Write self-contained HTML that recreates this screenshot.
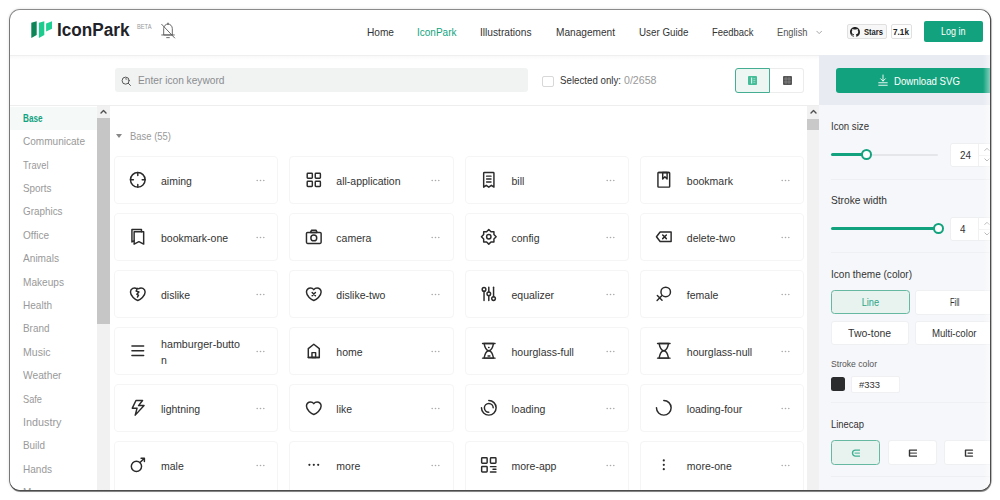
<!DOCTYPE html>
<html lang="en"><head><meta charset="utf-8"><title>IconPark</title>
<style>
html,body{margin:0;padding:0;background:#fff;}
body{width:1000px;height:500px;position:relative;overflow:hidden;font-family:"Liberation Sans",sans-serif;}
#frame{position:absolute;left:10px;top:10px;width:980px;height:480px;border-radius:10px;background:#fff;overflow:hidden;}
#shadow{position:absolute;left:10px;top:10px;width:980px;height:480px;border-radius:10px;box-shadow:0 0 0 1px rgba(0,0,0,.40), 0.600px 1px 0.600px 0.900px rgba(0,0,0,.45), 0 0 3px 1px rgba(0,0,0,.14);}
.t{position:absolute;white-space:nowrap;}
.b{position:absolute;box-sizing:border-box;}
#in{position:absolute;left:-10px;top:-10px;width:1000px;height:500px;}
</style></head><body>
<div id="shadow"></div>
<div id="frame"><div id="in">
<div class="b" style="left:10px;top:54.6px;width:980px;height:1.2px;background:#efefef;"></div>
<div class="b" style="left:10px;top:55.8px;width:809px;height:4px;background:linear-gradient(180deg,#f9f9f9,#fdfdfd 70%,#fff);"></div>
<svg class="b" style="left:30px;top:20px" width="24" height="20" viewBox="0 0 24 20"><path d="M1.300 2.800L6.700 1.300V15.100L1.300 18.100Z" fill="#0d8558"/><path d="M8.900 2.800L14.300 1.300V15.100L8.900 18.100Z" fill="#1ecb8f"/><path d="M16.100 3.400L22 1.300V8.800L16.100 11.500Z" fill="#1fd093"/></svg>
<span id="t1" class="t" style="left:56.7px;top:18.2px;font-size:17.5px;line-height:24px;color:#1f2329;font-weight:700;transform:scaleX(0.9819);transform-origin:left center;">IconPark</span>
<span id="t2" class="t" style="left:137px;top:22.8px;font-size:6.5px;line-height:8px;color:#999;font-weight:400;transform:scaleX(0.8788);transform-origin:left center;">BETA</span>
<svg class="b" style="left:160px;top:21.5px;" width="16" height="17.3" viewBox="0 -2 48 52" fill="none" stroke="#5a5a5a" stroke-width="2.7" stroke-linecap="round" stroke-linejoin="round"><path d="M24 4c-7.500 0-13 6.300-13 14v19h26V18c0-7.700-5.500-14-13-14Z"/><path d="M5 37h38M20 45h8M24 4V1"/><path d="M5 5l39 41"/></svg>
<span id="t3" class="t" style="left:366.75px;top:24.5px;font-size:10.5px;line-height:15px;color:#333;font-weight:400;transform:scaleX(0.9637);transform-origin:left center;">Home</span>
<span id="t4" class="t" style="left:417px;top:24.5px;font-size:10.5px;line-height:15px;color:#12a37e;font-weight:400;transform:scaleX(0.9532);transform-origin:left center;">IconPark</span>
<span id="t5" class="t" style="left:480px;top:24.5px;font-size:10.5px;line-height:15px;color:#333;font-weight:400;transform:scaleX(0.9697);transform-origin:left center;">Illustrations</span>
<span id="t6" class="t" style="left:555.5px;top:24.5px;font-size:10.5px;line-height:15px;color:#333;font-weight:400;transform:scaleX(0.9625);transform-origin:left center;">Management</span>
<span id="t7" class="t" style="left:638.75px;top:24.5px;font-size:10.5px;line-height:15px;color:#333;font-weight:400;transform:scaleX(0.9320);transform-origin:left center;">User Guide</span>
<span id="t8" class="t" style="left:711.75px;top:24.5px;font-size:10.5px;line-height:15px;color:#333;font-weight:400;transform:scaleX(0.8997);transform-origin:left center;">Feedback</span>
<span id="t9" class="t" style="left:776.5px;top:24.5px;font-size:10.5px;line-height:15px;color:#555;font-weight:400;transform:scaleX(0.8853);transform-origin:left center;">English</span>
<svg class="b" style="left:816px;top:29.5px;" width="6.4" height="4.8" viewBox="0 0 8 6" fill="none" stroke="#999" stroke-width="1.1" stroke-linecap="round" stroke-linejoin="round"><path d="M1 1.500l3 3 3-3"/></svg>
<div class="b" style="left:847px;top:24px;width:39.5px;height:14.8px;background:#f7f7f7;border:1px solid #e0e0e0;border-radius:2px;"></div>
<svg class="b" style="left:850px;top:26.500px" width="10" height="10" viewBox="0 0 16 16"><path fill="#222" d="M8 0C3.580 0 0 3.580 0 8c0 3.540 2.290 6.530 5.470 7.590.4.070.55-.17.55-.38 0-.19-.010-.82-.010-1.490-2.010.370-2.530-.49-2.690-.94-.090-.230-.48-.94-.82-1.130-.28-.15-.68-.52-.010-.53.630-.010 1.080.58 1.230.82.720 1.210 1.870.870 2.330.660.070-.52.280-.870.510-1.070-1.780-.2-3.640-.89-3.640-3.950 0-.870.310-1.590.82-2.150-.080-.2-.36-1.020.080-2.120 0 0 .670-.210 2.200.82.640-.18 1.320-.27 2-.27s1.360.090 2 .27c1.530-1.040 2.200-.82 2.200-.82.440 1.100.160 1.920.080 2.120.51.560.82 1.270.82 2.150 0 3.070-1.870 3.750-3.650 3.950.29.250.54.730.54 1.480 0 1.070-.010 1.930-.010 2.200 0 .210.150.460.550.380A8.013 8.013 0 0 0 16 8c0-4.420-3.580-8-8-8z"/></svg>
<span id="t10" class="t" style="left:863.5px;top:26.5px;font-size:9px;line-height:10px;color:#222;font-weight:700;transform:scaleX(0.8439);transform-origin:left center;">Stars</span>
<div class="b" style="left:890.5px;top:24px;width:21.5px;height:14.8px;background:#fdfdfd;border:1px solid #e0e0e0;border-radius:2px;"></div>
<span id="t11" class="t" style="left:893.4px;top:26.5px;font-size:9px;line-height:10px;color:#222;font-weight:700;transform:scaleX(0.9127);transform-origin:left center;">7.1k</span>
<div class="b" style="left:924px;top:21px;width:58.5px;height:21px;background:#12a37e;border-radius:2px;"></div>
<div class="t" style="left:953.6px;width:200px;margin-left:-100px;text-align:center;top:24.2px;font-size:10.5px;line-height:15px;color:#fff;font-weight:400;"><span id="t12" style="display:inline-block;transform:scaleX(0.8564);transform-origin:center center;">Log in</span></div>
<div class="b" style="left:10px;top:105px;width:809px;height:1px;background:#eeeeee;"></div>
<div class="b" style="left:114.5px;top:68.3px;width:413px;height:23.6px;background:#f1f3f3;border-radius:3px;"></div>
<svg class="b" style="left:120.8px;top:75.6px;" width="10.6" height="10.6" viewBox="0 0 48 48" fill="none" stroke="#555" stroke-width="4.4" stroke-linecap="round" stroke-linejoin="round"><circle cx="21" cy="21" r="16"/><path d="M33 33l10 10M27 15a8 8 0 0 0-6-2.500"/></svg>
<span id="t13" class="t" style="left:137.5px;top:72.2px;font-size:11.5px;line-height:16px;color:#8b8d8f;font-weight:400;transform:scaleX(0.8845);transform-origin:left center;">Enter icon keyword</span>
<div class="b" style="left:542px;top:75.5px;width:11.5px;height:11.5px;background:#fff;border:1px solid #d8d8d8;border-radius:2px;"></div>
<span id="t14" class="t" style="left:559.5px;top:73px;font-size:10.5px;line-height:15px;color:#333;font-weight:400;transform:scaleX(0.9247);transform-origin:left center;">Selected only:</span>
<span id="t15" class="t" style="left:623.5px;top:73px;font-size:10.5px;line-height:15px;color:#999;font-weight:400;transform:scaleX(1.0117);transform-origin:left center;">0/2658</span>
<div class="b" style="left:734.9px;top:68px;width:35px;height:24.5px;background:#eef6f3;border:1px solid #45ad91;border-radius:3px 0 0 3px;"></div>
<div class="b" style="left:769.5px;top:68px;width:34.5px;height:24.5px;background:#fff;border:1px solid #ececec;border-left:none;border-radius:0 3px 3px 0;"></div>
<svg class="b" style="left:748.200px;top:75.800px" width="9" height="9" viewBox="0 0 9 9"><rect x="0" y="0" width="9" height="9" rx="1" fill="#45bd98"/><rect x="3" y="1.500" width="1.200" height="6" fill="#d9f3ea"/><rect x="5.300" y="2.200" width="2" height="1" fill="#8fdcc4"/><rect x="5.300" y="4" width="2" height="1" fill="#8fdcc4"/><rect x="5.300" y="5.800" width="2" height="1" fill="#8fdcc4"/></svg>
<svg class="b" style="left:782.500px;top:75.800px" width="9" height="9" viewBox="0 0 9 9"><rect x="0" y="0" width="9" height="9" rx="1" fill="#555"/><path d="M3 0.800v7.400M6 0.800v7.400M0.800 3h7.400M0.800 6h7.400" stroke="#8a8a8a" stroke-width=".7"/></svg>
<div class="b" style="left:819px;top:55px;width:171px;height:50px;background:#e9ebf3;"></div>
<div class="b" style="left:819px;top:105px;width:171px;height:390px;background:#f6f7fa;"></div>
<div class="b" style="left:836.25px;top:68px;width:160px;height:24.5px;background:#12a37e;border-radius:3px;"></div>
<svg class="b" style="left:876.5px;top:74px;" width="12" height="12.5" viewBox="0 0 48 50" fill="none" stroke="#fff" stroke-width="3.6" stroke-linecap="round" stroke-linejoin="round"><path d="M24 4v24M14.500 19l9.500 9.500 9.500-9.500M7 35h34M7 45h34"/></svg>
<span id="t16" class="t" style="left:894.2px;top:73px;font-size:11.3px;line-height:16px;color:#fff;font-weight:400;transform:scaleX(0.8544);transform-origin:left center;">Download SVG</span>
<span id="t17" class="t" style="left:830.8px;top:119.3px;font-size:10.5px;line-height:15px;color:#333;font-weight:400;transform:scaleX(0.9170);transform-origin:left center;">Icon size</span>
<div class="b" style="left:831px;top:153.5px;width:107px;height:2.6px;background:#e4e6ea;border-radius:1.500px;"></div>
<div class="b" style="left:831px;top:153.3px;width:35px;height:3px;background:#12a37e;border-radius:1.500px;"></div>
<div class="b" style="left:860.9px;top:149.3px;width:11px;height:11px;background:#fff;border:2px solid #12a37e;border-radius:50%;"></div>
<div class="b" style="left:950.2px;top:143px;width:50px;height:24px;background:#fff;border:1px solid #eeeff1;border-radius:3px;"></div>
<span id="t18" class="t" style="left:959.6px;top:148.1px;font-size:10.5px;line-height:15px;color:#333;font-weight:400;transform:scaleX(0.9412);transform-origin:left center;">24</span>
<svg class="b" style="left:983.5px;top:146.7px;" width="6" height="4.3" viewBox="0 0 7 5" fill="none" stroke="#999" stroke-width="1" stroke-linecap="round" stroke-linejoin="round"><path d="M1 4l2.500-2.500L6 4"/></svg>
<svg class="b" style="left:983.5px;top:158.3px;" width="6" height="4.3" viewBox="0 0 7 5" fill="none" stroke="#999" stroke-width="1" stroke-linecap="round" stroke-linejoin="round"><path d="M1 1l2.500 2.500L6 1"/></svg>
<span id="t19" class="t" style="left:830.8px;top:192.5px;font-size:10.5px;line-height:15px;color:#333;font-weight:400;transform:scaleX(0.9692);transform-origin:left center;">Stroke width</span>
<div class="b" style="left:831px;top:227.3px;width:107px;height:3px;background:#12a37e;border-radius:1.500px;"></div>
<div class="b" style="left:932.5px;top:223.3px;width:11px;height:11px;background:#fff;border:2px solid #12a37e;border-radius:50%;"></div>
<div class="b" style="left:950.2px;top:217px;width:50px;height:24px;background:#fff;border:1px solid #eeeff1;border-radius:3px;"></div>
<span id="t20" class="t" style="left:959.8px;top:222.1px;font-size:10.5px;line-height:15px;color:#333;font-weight:400;transform:scaleX(0.9412);transform-origin:left center;">4</span>
<svg class="b" style="left:983.5px;top:220.7px;" width="6" height="4.3" viewBox="0 0 7 5" fill="none" stroke="#999" stroke-width="1" stroke-linecap="round" stroke-linejoin="round"><path d="M1 4l2.500-2.500L6 4"/></svg>
<svg class="b" style="left:983.5px;top:232.3px;" width="6" height="4.3" viewBox="0 0 7 5" fill="none" stroke="#999" stroke-width="1" stroke-linecap="round" stroke-linejoin="round"><path d="M1 1l2.500 2.500L6 1"/></svg>
<div class="b" style="left:831px;top:252px;width:160px;height:1px;background:#eff0f3;"></div>
<div class="b" style="left:831px;top:179px;width:160px;height:1px;background:#eeeff2;"></div>
<div class="b" style="left:978px;top:144px;width:1px;height:22px;background:#f1f1f1;"></div>
<div class="b" style="left:978.5px;top:154.5px;width:12px;height:1px;background:#f3f3f3;"></div>
<div class="b" style="left:978px;top:218px;width:1px;height:22px;background:#f1f1f1;"></div>
<div class="b" style="left:978.5px;top:228.5px;width:12px;height:1px;background:#f3f3f3;"></div>
<span id="t21" class="t" style="left:830.8px;top:266.5px;font-size:10.5px;line-height:15px;color:#333;font-weight:400;transform:scaleX(0.9572);transform-origin:left center;">Icon theme (color)</span>
<div class="b" style="left:830.5px;top:290.2px;width:79.3px;height:24.3px;background:#e8f2ef;border:1.200px solid #66b8a0;border-radius:3.500px;"></div>
<div class="t" style="left:870.3px;width:200px;margin-left:-100px;text-align:center;top:295.2px;font-size:11px;line-height:15px;color:#2ba688;font-weight:400;"><span id="t22" style="display:inline-block;transform:scaleX(0.8415);transform-origin:center center;">Line</span></div>
<div class="b" style="left:915.2px;top:290.3px;width:80px;height:24.3px;background:#fff;border:1px solid #eff0f2;border-radius:3px;"></div>
<div class="t" style="left:954.6px;width:200px;margin-left:-100px;text-align:center;top:295.2px;font-size:10.5px;line-height:15px;color:#333;font-weight:400;"><span id="t23" style="display:inline-block;transform:scaleX(0.7153);transform-origin:center center;">Fill</span></div>
<div class="b" style="left:830.8px;top:320.6px;width:78.5px;height:24.3px;background:#fff;border:1px solid #eff0f2;border-radius:3px;"></div>
<div class="t" style="left:870px;width:200px;margin-left:-100px;text-align:center;top:326px;font-size:10.5px;line-height:15px;color:#333;font-weight:400;"><span id="t24" style="display:inline-block;transform:scaleX(0.9953);transform-origin:center center;">Two-tone</span></div>
<div class="b" style="left:915.2px;top:320.6px;width:80px;height:24.3px;background:#fff;border:1px solid #eff0f2;border-radius:3px;"></div>
<div class="t" style="left:953.8px;width:200px;margin-left:-100px;text-align:center;top:325.7px;font-size:10.5px;line-height:15px;color:#333;font-weight:400;"><span id="t25" style="display:inline-block;transform:scaleX(0.9187);transform-origin:center center;">Multi-color</span></div>
<span id="t26" class="t" style="left:830.8px;top:356.8px;font-size:9.5px;line-height:13px;color:#555;font-weight:400;transform:scaleX(0.9075);transform-origin:left center;">Stroke color</span>
<div class="b" style="left:830.8px;top:377.2px;width:14.5px;height:14px;background:#2b2c2e;border-radius:2.500px;"></div>
<div class="b" style="left:851.3px;top:375.6px;width:49px;height:17px;background:#fff;border:1px solid #f0f0f2;border-radius:2px;"></div>
<span id="t27" class="t" style="left:858.5px;top:379.4px;font-size:9.3px;line-height:13px;color:#333;font-weight:400;transform:scaleX(1.0151);transform-origin:left center;">#333</span>
<div class="b" style="left:831px;top:402px;width:160px;height:1px;background:#eff0f3;"></div>
<div class="b" style="left:831px;top:476px;width:160px;height:1px;background:#eeeff2;"></div>
<span id="t28" class="t" style="left:830.8px;top:416.5px;font-size:10.5px;line-height:15px;color:#333;font-weight:400;transform:scaleX(0.8972);transform-origin:left center;">Linecap</span>
<div class="b" style="left:830.6px;top:440px;width:49.5px;height:24.5px;background:#e8f2ef;border:1.200px solid #66b8a0;border-radius:3.500px;"></div>
<div class="b" style="left:887.5px;top:440px;width:49.25px;height:24.5px;background:#fff;border:1px solid #eff0f2;border-radius:3px;"></div>
<div class="b" style="left:944.25px;top:440px;width:49.25px;height:24.5px;background:#fff;border:1px solid #eff0f2;border-radius:3px;"></div>
<svg class="b" style="left:850.8px;top:449px;" width="9.5" height="8.2" viewBox="0 0 9.500 8" fill="none" stroke="#3fb092" stroke-width="1.4" stroke-linecap="round" stroke-linejoin="round"><path d="M8.500 1H4.500a3 3 0 0 0 0 6H8.500"/><path d="M4 4h4.500" stroke-width="1"/></svg>
<svg class="b" style="left:907.5px;top:449px;" width="9.5" height="8.2" viewBox="0 0 9.500 8" fill="none" stroke="#333" stroke-width="1.4" stroke-linecap="round" stroke-linejoin="round"><path d="M8.500 1H1.500v6H8.500"/><path d="M1.500 4H8.500" stroke-width="1"/></svg>
<svg class="b" style="left:964px;top:449px;" width="9.5" height="8.2" viewBox="0 0 9.500 8" fill="none" stroke="#333" stroke-width="1.4" stroke-linecap="round" stroke-linejoin="round"><path d="M8.500 1H1.500v6H8.500"/><path d="M4 4H8.500" stroke-width="1.100"/></svg>
<div class="b" style="left:10px;top:106.5px;width:87px;height:23px;background:#f5f9f8;"></div>
<span id="t29" class="t" style="left:23px;top:110.8px;font-size:10.5px;line-height:15px;color:#12a37e;font-weight:700;transform:scaleX(0.7766);transform-origin:left center;">Base</span>
<span id="t30" class="t" style="left:23px;top:134.2px;font-size:10.5px;line-height:15px;color:#999;font-weight:400;transform:scaleX(0.9571);transform-origin:left center;">Communicate</span>
<span id="t31" class="t" style="left:23px;top:157.6px;font-size:10.5px;line-height:15px;color:#999;font-weight:400;transform:scaleX(0.8855);transform-origin:left center;">Travel</span>
<span id="t32" class="t" style="left:23px;top:181px;font-size:10.5px;line-height:15px;color:#999;font-weight:400;transform:scaleX(0.9388);transform-origin:left center;">Sports</span>
<span id="t33" class="t" style="left:23px;top:204.4px;font-size:10.5px;line-height:15px;color:#999;font-weight:400;transform:scaleX(0.9401);transform-origin:left center;">Graphics</span>
<span id="t34" class="t" style="left:23px;top:227.8px;font-size:10.5px;line-height:15px;color:#999;font-weight:400;transform:scaleX(0.9547);transform-origin:left center;">Office</span>
<span id="t35" class="t" style="left:23px;top:251.2px;font-size:10.5px;line-height:15px;color:#999;font-weight:400;transform:scaleX(0.9636);transform-origin:left center;">Animals</span>
<span id="t36" class="t" style="left:23px;top:274.6px;font-size:10.5px;line-height:15px;color:#999;font-weight:400;transform:scaleX(0.9622);transform-origin:left center;">Makeups</span>
<span id="t37" class="t" style="left:23px;top:298px;font-size:10.5px;line-height:15px;color:#999;font-weight:400;transform:scaleX(0.9552);transform-origin:left center;">Health</span>
<span id="t38" class="t" style="left:23px;top:321.4px;font-size:10.5px;line-height:15px;color:#999;font-weight:400;transform:scaleX(0.9454);transform-origin:left center;">Brand</span>
<span id="t39" class="t" style="left:23px;top:344.8px;font-size:10.5px;line-height:15px;color:#999;font-weight:400;transform:scaleX(1.0028);transform-origin:left center;">Music</span>
<span id="t40" class="t" style="left:23px;top:368.2px;font-size:10.5px;line-height:15px;color:#999;font-weight:400;transform:scaleX(0.9747);transform-origin:left center;">Weather</span>
<span id="t41" class="t" style="left:23px;top:391.6px;font-size:10.5px;line-height:15px;color:#999;font-weight:400;transform:scaleX(0.8792);transform-origin:left center;">Safe</span>
<span id="t42" class="t" style="left:23px;top:415px;font-size:10.5px;line-height:15px;color:#999;font-weight:400;transform:scaleX(1.0305);transform-origin:left center;">Industry</span>
<span id="t43" class="t" style="left:23px;top:438.4px;font-size:10.5px;line-height:15px;color:#999;font-weight:400;transform:scaleX(0.9418);transform-origin:left center;">Build</span>
<span id="t44" class="t" style="left:23px;top:461.8px;font-size:10.5px;line-height:15px;color:#999;font-weight:400;transform:scaleX(0.9552);transform-origin:left center;">Hands</span>
<span id="t45" class="t" style="left:23px;top:485.2px;font-size:10.5px;line-height:15px;color:#999;font-weight:400;transform:scaleX(0.9519);transform-origin:left center;">Money</span>
<div class="b" style="left:97px;top:106px;width:13px;height:390px;background:#f1f1f1;"></div>
<div class="b" style="left:97px;top:118px;width:12.7px;height:205.5px;background:#c6c6c6;"></div>
<svg class="b" style="left:100px;top:108.5px;" width="7" height="5" viewBox="0 0 7 5" fill="none" stroke="#505050" stroke-width="1.4" stroke-linecap="round" stroke-linejoin="round"><path d="M1 4l2.500-2.500L6 4"/></svg>
<div class="b" style="left:806.5px;top:106px;width:12.5px;height:390px;background:#f1f1f1;"></div>
<div class="b" style="left:806.7px;top:118.7px;width:12.3px;height:11.8px;background:#c9c9c9;"></div>
<svg class="b" style="left:809.5px;top:108.5px;" width="7" height="5" viewBox="0 0 7 5" fill="none" stroke="#505050" stroke-width="1.4" stroke-linecap="round" stroke-linejoin="round"><path d="M1 4l2.500-2.500L6 4"/></svg>
<svg class="b" style="left:116.200px;top:133.800px" width="6" height="4" viewBox="0 0 6 4"><path d="M0 0h6L3 4Z" fill="#888"/></svg>
<span id="t46" class="t" style="left:130px;top:128.5px;font-size:10.5px;line-height:15px;color:#999;font-weight:400;transform:scaleX(0.9005);transform-origin:left center;">Base (55)</span>
<div class="b" style="left:114.1px;top:156px;width:164.4px;height:47.8px;background:#fff;border:1px solid #f5f5f5;border-radius:4px;"></div>
<svg class="b" style="left:129.3px;top:171.3px;" width="17.6" height="17.6" viewBox="0 0 48 48" fill="none" stroke="#2b2b2b" stroke-width="4" stroke-linecap="round" stroke-linejoin="round"><circle cx="24" cy="24" r="20"/><path d="M24 37v7M36 24h8M4 24h8M24 12V4"/></svg>
<span id="t47" class="t" style="left:161px;top:173.5px;font-size:10.5px;line-height:15px;color:#333;font-weight:400;">aiming</span>
<svg class="b" style="left:255.5px;top:178.5px" width="9" height="3" viewBox="0 0 9 3"><circle cx="1.200" cy="1.500" r=".8" fill="#aaa"/><circle cx="4.500" cy="1.500" r=".8" fill="#aaa"/><circle cx="7.800" cy="1.500" r=".8" fill="#aaa"/></svg>
<div class="b" style="left:289.4px;top:156px;width:164.4px;height:47.8px;background:#fff;border:1px solid #f5f5f5;border-radius:4px;"></div>
<svg class="b" style="left:304.6px;top:171.3px;" width="17.6" height="17.6" viewBox="0 0 48 48" fill="none" stroke="#2b2b2b" stroke-width="4" stroke-linecap="round" stroke-linejoin="round"><rect x="6" y="6" width="14" height="14" rx="2"/><rect x="6" y="28" width="14" height="14" rx="2"/><rect x="28" y="6" width="14" height="14" rx="2"/><rect x="28" y="28" width="14" height="14" rx="2"/></svg>
<span id="t48" class="t" style="left:336.3px;top:173.5px;font-size:10.5px;line-height:15px;color:#333;font-weight:400;">all-application</span>
<svg class="b" style="left:430.8px;top:178.5px" width="9" height="3" viewBox="0 0 9 3"><circle cx="1.200" cy="1.500" r=".8" fill="#aaa"/><circle cx="4.500" cy="1.500" r=".8" fill="#aaa"/><circle cx="7.800" cy="1.500" r=".8" fill="#aaa"/></svg>
<div class="b" style="left:464.6px;top:156px;width:164.4px;height:47.8px;background:#fff;border:1px solid #f5f5f5;border-radius:4px;"></div>
<svg class="b" style="left:479.8px;top:171.3px;" width="17.6" height="17.6" viewBox="0 0 48 48" fill="none" stroke="#2b2b2b" stroke-width="4" stroke-linecap="round" stroke-linejoin="round"><path d="M10 6a2 2 0 0 1 2-2h24a2 2 0 0 1 2 2v38l-7-5-7 5-7-5-7 5V6Z"/><path d="M18 22h12M18 30h12M18 14h12"/></svg>
<span id="t49" class="t" style="left:511.5px;top:173.5px;font-size:10.5px;line-height:15px;color:#333;font-weight:400;">bill</span>
<svg class="b" style="left:606px;top:178.5px" width="9" height="3" viewBox="0 0 9 3"><circle cx="1.200" cy="1.500" r=".8" fill="#aaa"/><circle cx="4.500" cy="1.500" r=".8" fill="#aaa"/><circle cx="7.800" cy="1.500" r=".8" fill="#aaa"/></svg>
<div class="b" style="left:639.9px;top:156px;width:164.4px;height:47.8px;background:#fff;border:1px solid #f5f5f5;border-radius:4px;"></div>
<svg class="b" style="left:655.1px;top:171.3px;" width="17.6" height="17.6" viewBox="0 0 48 48" fill="none" stroke="#2b2b2b" stroke-width="4" stroke-linecap="round" stroke-linejoin="round"><path d="M10 44a2 2 0 0 1-2-2V6a2 2 0 0 1 2-2h28a2 2 0 0 1 2 2v36a2 2 0 0 1-2 2H10Z"/><path d="M21 22V4h12v18l-6-6.273L21 22Z"/><path d="M10 4h28"/></svg>
<span id="t50" class="t" style="left:686.8px;top:173.5px;font-size:10.5px;line-height:15px;color:#333;font-weight:400;">bookmark</span>
<svg class="b" style="left:781.3px;top:178.5px" width="9" height="3" viewBox="0 0 9 3"><circle cx="1.200" cy="1.500" r=".8" fill="#aaa"/><circle cx="4.500" cy="1.500" r=".8" fill="#aaa"/><circle cx="7.800" cy="1.500" r=".8" fill="#aaa"/></svg>
<div class="b" style="left:114.1px;top:213px;width:164.4px;height:47.8px;background:#fff;border:1px solid #f5f5f5;border-radius:4px;"></div>
<svg class="b" style="left:129.3px;top:228.3px;" width="17.6" height="17.6" viewBox="0 0 48 48" fill="none" stroke="#2b2b2b" stroke-width="4" stroke-linecap="round" stroke-linejoin="round"><path d="M34 10V4H8v34l6-3"/><path d="M14 44V10h26v34l-13-6.727L14 44Z"/></svg>
<span id="t51" class="t" style="left:161px;top:230.5px;font-size:10.5px;line-height:15px;color:#333;font-weight:400;">bookmark-one</span>
<svg class="b" style="left:255.5px;top:235.5px" width="9" height="3" viewBox="0 0 9 3"><circle cx="1.200" cy="1.500" r=".8" fill="#aaa"/><circle cx="4.500" cy="1.500" r=".8" fill="#aaa"/><circle cx="7.800" cy="1.500" r=".8" fill="#aaa"/></svg>
<div class="b" style="left:289.4px;top:213px;width:164.4px;height:47.8px;background:#fff;border:1px solid #f5f5f5;border-radius:4px;"></div>
<svg class="b" style="left:304.6px;top:228.3px;" width="17.6" height="17.6" viewBox="0 0 48 48" fill="none" stroke="#2b2b2b" stroke-width="4" stroke-linecap="round" stroke-linejoin="round"><path d="M15 12l3-6h12l3 6H15Z"/><rect x="4" y="12" width="40" height="30" rx="3"/><circle cx="24" cy="27" r="8"/></svg>
<span id="t52" class="t" style="left:336.3px;top:230.5px;font-size:10.5px;line-height:15px;color:#333;font-weight:400;">camera</span>
<svg class="b" style="left:430.8px;top:235.5px" width="9" height="3" viewBox="0 0 9 3"><circle cx="1.200" cy="1.500" r=".8" fill="#aaa"/><circle cx="4.500" cy="1.500" r=".8" fill="#aaa"/><circle cx="7.800" cy="1.500" r=".8" fill="#aaa"/></svg>
<div class="b" style="left:464.6px;top:213px;width:164.4px;height:47.8px;background:#fff;border:1px solid #f5f5f5;border-radius:4px;"></div>
<svg class="b" style="left:479.8px;top:228.3px;" width="17.6" height="17.6" viewBox="0 0 48 48" fill="none" stroke="#2b2b2b" stroke-width="4" stroke-linecap="round" stroke-linejoin="round"><path d="M24 4l-6 6h-8v8l-6 6 6 6v8h8l6 6 6-6h8v-8l6-6-6-6v-8h-8l-6-6Z"/><circle cx="24" cy="24" r="6"/></svg>
<span id="t53" class="t" style="left:511.5px;top:230.5px;font-size:10.5px;line-height:15px;color:#333;font-weight:400;">config</span>
<svg class="b" style="left:606px;top:235.5px" width="9" height="3" viewBox="0 0 9 3"><circle cx="1.200" cy="1.500" r=".8" fill="#aaa"/><circle cx="4.500" cy="1.500" r=".8" fill="#aaa"/><circle cx="7.800" cy="1.500" r=".8" fill="#aaa"/></svg>
<div class="b" style="left:639.9px;top:213px;width:164.4px;height:47.8px;background:#fff;border:1px solid #f5f5f5;border-radius:4px;"></div>
<svg class="b" style="left:655.1px;top:228.3px;" width="17.6" height="17.6" viewBox="0 0 48 48" fill="none" stroke="#2b2b2b" stroke-width="4" stroke-linecap="round" stroke-linejoin="round"><path d="M14 11L4 24l10 13h30V11H14Z"/><path d="M21 19l10 10M31 19L21 29"/></svg>
<span id="t54" class="t" style="left:686.8px;top:230.5px;font-size:10.5px;line-height:15px;color:#333;font-weight:400;">delete-two</span>
<svg class="b" style="left:781.3px;top:235.5px" width="9" height="3" viewBox="0 0 9 3"><circle cx="1.200" cy="1.500" r=".8" fill="#aaa"/><circle cx="4.500" cy="1.500" r=".8" fill="#aaa"/><circle cx="7.800" cy="1.500" r=".8" fill="#aaa"/></svg>
<div class="b" style="left:114.1px;top:270px;width:164.4px;height:47.8px;background:#fff;border:1px solid #f5f5f5;border-radius:4px;"></div>
<svg class="b" style="left:129.3px;top:285.3px;" width="17.6" height="17.6" viewBox="0 0 48 48" fill="none" stroke="#2b2b2b" stroke-width="4" stroke-linecap="round" stroke-linejoin="round"><path d="M26.500 10.130A11 11 0 0 1 44 19c0 11-13 21-20 23.326C17 40 4 30 4 19a11 11 0 0 1 17.500-8.870"/><path d="M23 9l-3.500 7.500L27 19l-5.500 6.500 4.500 2-3 5.500"/></svg>
<span id="t55" class="t" style="left:161px;top:287.5px;font-size:10.5px;line-height:15px;color:#333;font-weight:400;">dislike</span>
<svg class="b" style="left:255.5px;top:292.5px" width="9" height="3" viewBox="0 0 9 3"><circle cx="1.200" cy="1.500" r=".8" fill="#aaa"/><circle cx="4.500" cy="1.500" r=".8" fill="#aaa"/><circle cx="7.800" cy="1.500" r=".8" fill="#aaa"/></svg>
<div class="b" style="left:289.4px;top:270px;width:164.4px;height:47.8px;background:#fff;border:1px solid #f5f5f5;border-radius:4px;"></div>
<svg class="b" style="left:304.6px;top:285.3px;" width="17.6" height="17.6" viewBox="0 0 48 48" fill="none" stroke="#2b2b2b" stroke-width="4" stroke-linecap="round" stroke-linejoin="round"><path d="M15 8C8.925 8 4 12.925 4 19c0 11 13 21 20 23.326C31 40 44 30 44 19c0-6.075-4.925-11-11-11-3.72 0-7.01 1.847-9 4.674A10.987 10.987 0 0 0 15 8Z"/><path d="M19.500 20.500l9 9M28.500 20.500l-9 9"/></svg>
<span id="t56" class="t" style="left:336.3px;top:287.5px;font-size:10.5px;line-height:15px;color:#333;font-weight:400;">dislike-two</span>
<svg class="b" style="left:430.8px;top:292.5px" width="9" height="3" viewBox="0 0 9 3"><circle cx="1.200" cy="1.500" r=".8" fill="#aaa"/><circle cx="4.500" cy="1.500" r=".8" fill="#aaa"/><circle cx="7.800" cy="1.500" r=".8" fill="#aaa"/></svg>
<div class="b" style="left:464.6px;top:270px;width:164.4px;height:47.8px;background:#fff;border:1px solid #f5f5f5;border-radius:4px;"></div>
<svg class="b" style="left:479.8px;top:285.3px;" width="17.6" height="17.6" viewBox="0 0 48 48" fill="none" stroke="#2b2b2b" stroke-width="4" stroke-linecap="round" stroke-linejoin="round"><circle cx="11" cy="12" r="5"/><path d="M11 17v25"/><circle cx="24" cy="24" r="5"/><path d="M24 6v13M24 29v13"/><circle cx="37" cy="37" r="5"/><path d="M37 6v26"/></svg>
<span id="t57" class="t" style="left:511.5px;top:287.5px;font-size:10.5px;line-height:15px;color:#333;font-weight:400;">equalizer</span>
<svg class="b" style="left:606px;top:292.5px" width="9" height="3" viewBox="0 0 9 3"><circle cx="1.200" cy="1.500" r=".8" fill="#aaa"/><circle cx="4.500" cy="1.500" r=".8" fill="#aaa"/><circle cx="7.800" cy="1.500" r=".8" fill="#aaa"/></svg>
<div class="b" style="left:639.9px;top:270px;width:164.4px;height:47.8px;background:#fff;border:1px solid #f5f5f5;border-radius:4px;"></div>
<svg class="b" style="left:655.1px;top:285.3px;" width="17.6" height="17.6" viewBox="0 0 48 48" fill="none" stroke="#2b2b2b" stroke-width="4" stroke-linecap="round" stroke-linejoin="round"><circle cx="29.200" cy="19" r="13"/><path d="M18.500 29.500L5.700 42.300M6.400 28.800l12.800 12.800"/></svg>
<span id="t58" class="t" style="left:686.8px;top:287.5px;font-size:10.5px;line-height:15px;color:#333;font-weight:400;">female</span>
<svg class="b" style="left:781.3px;top:292.5px" width="9" height="3" viewBox="0 0 9 3"><circle cx="1.200" cy="1.500" r=".8" fill="#aaa"/><circle cx="4.500" cy="1.500" r=".8" fill="#aaa"/><circle cx="7.800" cy="1.500" r=".8" fill="#aaa"/></svg>
<div class="b" style="left:114.1px;top:327px;width:164.4px;height:47.8px;background:#fff;border:1px solid #f5f5f5;border-radius:4px;"></div>
<svg class="b" style="left:129.3px;top:342.3px;" width="17.6" height="17.6" viewBox="0 0 48 48" fill="none" stroke="#2b2b2b" stroke-width="4" stroke-linecap="round" stroke-linejoin="round"><path d="M8 11h32M8 24h32M8 37h32"/></svg>
<span id="t59" class="t" style="left:161px;top:336.5px;font-size:10.5px;line-height:15px;color:#333;font-weight:400;transform:scaleX(1.0175);transform-origin:left center;">hamburger-butto</span>
<span id="t60" class="t" style="left:161px;top:352.5px;font-size:10.5px;line-height:15px;color:#333;font-weight:400;">n</span>
<svg class="b" style="left:255.5px;top:349.5px" width="9" height="3" viewBox="0 0 9 3"><circle cx="1.200" cy="1.500" r=".8" fill="#aaa"/><circle cx="4.500" cy="1.500" r=".8" fill="#aaa"/><circle cx="7.800" cy="1.500" r=".8" fill="#aaa"/></svg>
<div class="b" style="left:289.4px;top:327px;width:164.4px;height:47.8px;background:#fff;border:1px solid #f5f5f5;border-radius:4px;"></div>
<svg class="b" style="left:304.6px;top:342.3px;" width="17.6" height="17.6" viewBox="0 0 48 48" fill="none" stroke="#2b2b2b" stroke-width="4" stroke-linecap="round" stroke-linejoin="round"><path d="M9 18v24h30V18L24 6 9 18Z"/><path d="M19 29v13h10V29H19Z"/><path d="M9 42h30"/></svg>
<span id="t61" class="t" style="left:336.3px;top:344.5px;font-size:10.5px;line-height:15px;color:#333;font-weight:400;">home</span>
<svg class="b" style="left:430.8px;top:349.5px" width="9" height="3" viewBox="0 0 9 3"><circle cx="1.200" cy="1.500" r=".8" fill="#aaa"/><circle cx="4.500" cy="1.500" r=".8" fill="#aaa"/><circle cx="7.800" cy="1.500" r=".8" fill="#aaa"/></svg>
<div class="b" style="left:464.6px;top:327px;width:164.4px;height:47.8px;background:#fff;border:1px solid #f5f5f5;border-radius:4px;"></div>
<svg class="b" style="left:479.8px;top:342.3px;" width="17.6" height="17.6" viewBox="0 0 48 48" fill="none" stroke="#2b2b2b" stroke-width="4" stroke-linecap="round" stroke-linejoin="round"><path d="M7 4h34M7 44h34"/><path d="M11 44c2.667-13.333 7-20 13-20s10.333 6.667 13 20H11Z"/><path d="M37 4c-2.667 13.333-7 20-13 20S13.667 17.333 11 4h26Z"/><path d="M23.500 15h1M22 38h5"/></svg>
<span id="t62" class="t" style="left:511.5px;top:344.5px;font-size:10.5px;line-height:15px;color:#333;font-weight:400;">hourglass-full</span>
<svg class="b" style="left:606px;top:349.5px" width="9" height="3" viewBox="0 0 9 3"><circle cx="1.200" cy="1.500" r=".8" fill="#aaa"/><circle cx="4.500" cy="1.500" r=".8" fill="#aaa"/><circle cx="7.800" cy="1.500" r=".8" fill="#aaa"/></svg>
<div class="b" style="left:639.9px;top:327px;width:164.4px;height:47.8px;background:#fff;border:1px solid #f5f5f5;border-radius:4px;"></div>
<svg class="b" style="left:655.1px;top:342.3px;" width="17.6" height="17.6" viewBox="0 0 48 48" fill="none" stroke="#2b2b2b" stroke-width="4" stroke-linecap="round" stroke-linejoin="round"><path d="M7 4h34M7 44h34"/><path d="M11 44c2.667-13.333 7-20 13-20s10.333 6.667 13 20H11Z"/><path d="M37 4c-2.667 13.333-7 20-13 20S13.667 17.333 11 4h26Z"/></svg>
<span id="t63" class="t" style="left:686.8px;top:344.5px;font-size:10.5px;line-height:15px;color:#333;font-weight:400;">hourglass-null</span>
<svg class="b" style="left:781.3px;top:349.5px" width="9" height="3" viewBox="0 0 9 3"><circle cx="1.200" cy="1.500" r=".8" fill="#aaa"/><circle cx="4.500" cy="1.500" r=".8" fill="#aaa"/><circle cx="7.800" cy="1.500" r=".8" fill="#aaa"/></svg>
<div class="b" style="left:114.1px;top:384px;width:164.4px;height:47.8px;background:#fff;border:1px solid #f5f5f5;border-radius:4px;"></div>
<svg class="b" style="left:129.3px;top:399.3px;" width="17.6" height="17.6" viewBox="0 0 48 48" fill="none" stroke="#2b2b2b" stroke-width="4" stroke-linecap="round" stroke-linejoin="round"><path d="M19 4h18L26 18h15L17 44l5-19H9L19 4Z"/></svg>
<span id="t64" class="t" style="left:161px;top:401.5px;font-size:10.5px;line-height:15px;color:#333;font-weight:400;">lightning</span>
<svg class="b" style="left:255.5px;top:406.5px" width="9" height="3" viewBox="0 0 9 3"><circle cx="1.200" cy="1.500" r=".8" fill="#aaa"/><circle cx="4.500" cy="1.500" r=".8" fill="#aaa"/><circle cx="7.800" cy="1.500" r=".8" fill="#aaa"/></svg>
<div class="b" style="left:289.4px;top:384px;width:164.4px;height:47.8px;background:#fff;border:1px solid #f5f5f5;border-radius:4px;"></div>
<svg class="b" style="left:304.6px;top:399.3px;" width="17.6" height="17.6" viewBox="0 0 48 48" fill="none" stroke="#2b2b2b" stroke-width="4" stroke-linecap="round" stroke-linejoin="round"><path d="M15 8C8.925 8 4 12.925 4 19c0 11 13 21 20 23.326C31 40 44 30 44 19c0-6.075-4.925-11-11-11-3.72 0-7.01 1.847-9 4.674A10.987 10.987 0 0 0 15 8Z"/></svg>
<span id="t65" class="t" style="left:336.3px;top:401.5px;font-size:10.5px;line-height:15px;color:#333;font-weight:400;">like</span>
<svg class="b" style="left:430.8px;top:406.5px" width="9" height="3" viewBox="0 0 9 3"><circle cx="1.200" cy="1.500" r=".8" fill="#aaa"/><circle cx="4.500" cy="1.500" r=".8" fill="#aaa"/><circle cx="7.800" cy="1.500" r=".8" fill="#aaa"/></svg>
<div class="b" style="left:464.6px;top:384px;width:164.4px;height:47.8px;background:#fff;border:1px solid #f5f5f5;border-radius:4px;"></div>
<svg class="b" style="left:479.8px;top:399.3px;" width="17.6" height="17.6" viewBox="0 0 48 48" fill="none" stroke="#2b2b2b" stroke-width="4" stroke-linecap="round" stroke-linejoin="round"><path d="M4 24c0 11.046 8.954 20 20 20s20-8.954 20-20S35.046 4 24 4"/><path d="M36 24c0-6.627-5.373-12-12-12s-12 5.373-12 12 5.373 12 12 12"/></svg>
<span id="t66" class="t" style="left:511.5px;top:401.5px;font-size:10.5px;line-height:15px;color:#333;font-weight:400;">loading</span>
<svg class="b" style="left:606px;top:406.5px" width="9" height="3" viewBox="0 0 9 3"><circle cx="1.200" cy="1.500" r=".8" fill="#aaa"/><circle cx="4.500" cy="1.500" r=".8" fill="#aaa"/><circle cx="7.800" cy="1.500" r=".8" fill="#aaa"/></svg>
<div class="b" style="left:639.9px;top:384px;width:164.4px;height:47.8px;background:#fff;border:1px solid #f5f5f5;border-radius:4px;"></div>
<svg class="b" style="left:655.1px;top:399.3px;" width="17.6" height="17.6" viewBox="0 0 48 48" fill="none" stroke="#2b2b2b" stroke-width="4" stroke-linecap="round" stroke-linejoin="round"><path d="M4 24c0 11.046 8.954 20 20 20s20-8.954 20-20S35.046 4 24 4"/></svg>
<span id="t67" class="t" style="left:686.8px;top:401.5px;font-size:10.5px;line-height:15px;color:#333;font-weight:400;">loading-four</span>
<svg class="b" style="left:781.3px;top:406.5px" width="9" height="3" viewBox="0 0 9 3"><circle cx="1.200" cy="1.500" r=".8" fill="#aaa"/><circle cx="4.500" cy="1.500" r=".8" fill="#aaa"/><circle cx="7.800" cy="1.500" r=".8" fill="#aaa"/></svg>
<div class="b" style="left:114.1px;top:441px;width:164.4px;height:54px;background:#fff;border:1px solid #f5f5f5;border-radius:4px;"></div>
<svg class="b" style="left:129.3px;top:456.3px;" width="17.6" height="17.6" viewBox="0 0 48 48" fill="none" stroke="#2b2b2b" stroke-width="4" stroke-linecap="round" stroke-linejoin="round"><circle cx="20.3" cy="28.1" r="14"/><path d="M30 18L42 6M33 6h9v9"/></svg>
<span id="t68" class="t" style="left:161px;top:458.5px;font-size:10.5px;line-height:15px;color:#333;font-weight:400;">male</span>
<svg class="b" style="left:255.5px;top:463.5px" width="9" height="3" viewBox="0 0 9 3"><circle cx="1.200" cy="1.500" r=".8" fill="#aaa"/><circle cx="4.500" cy="1.500" r=".8" fill="#aaa"/><circle cx="7.800" cy="1.500" r=".8" fill="#aaa"/></svg>
<div class="b" style="left:289.4px;top:441px;width:164.4px;height:54px;background:#fff;border:1px solid #f5f5f5;border-radius:4px;"></div>
<svg class="b" style="left:304.6px;top:456.3px;" width="17.6" height="17.6" viewBox="0 0 48 48" fill="none" stroke="#2b2b2b" stroke-width="4" stroke-linecap="round" stroke-linejoin="round"><circle cx="12" cy="24" r="3" fill="#2b2b2b" stroke="none"/><circle cx="24" cy="24" r="3" fill="#2b2b2b" stroke="none"/><circle cx="36" cy="24" r="3" fill="#2b2b2b" stroke="none"/></svg>
<span id="t69" class="t" style="left:336.3px;top:458.5px;font-size:10.5px;line-height:15px;color:#333;font-weight:400;">more</span>
<svg class="b" style="left:430.8px;top:463.5px" width="9" height="3" viewBox="0 0 9 3"><circle cx="1.200" cy="1.500" r=".8" fill="#aaa"/><circle cx="4.500" cy="1.500" r=".8" fill="#aaa"/><circle cx="7.800" cy="1.500" r=".8" fill="#aaa"/></svg>
<div class="b" style="left:464.6px;top:441px;width:164.4px;height:54px;background:#fff;border:1px solid #f5f5f5;border-radius:4px;"></div>
<svg class="b" style="left:479.8px;top:456.3px;" width="17.6" height="17.6" viewBox="0 0 48 48" fill="none" stroke="#2b2b2b" stroke-width="4" stroke-linecap="round" stroke-linejoin="round"><rect x="4.500" y="4.500" width="15" height="15" rx="2"/><rect x="4.500" y="28.500" width="15" height="15" rx="2"/><rect x="28.500" y="4.500" width="15" height="15" rx="2"/><path d="M28.500 29h15M35.500 36h8M28.500 43.500h15"/></svg>
<span id="t70" class="t" style="left:511.5px;top:458.5px;font-size:10.5px;line-height:15px;color:#333;font-weight:400;">more-app</span>
<svg class="b" style="left:606px;top:463.5px" width="9" height="3" viewBox="0 0 9 3"><circle cx="1.200" cy="1.500" r=".8" fill="#aaa"/><circle cx="4.500" cy="1.500" r=".8" fill="#aaa"/><circle cx="7.800" cy="1.500" r=".8" fill="#aaa"/></svg>
<div class="b" style="left:639.9px;top:441px;width:164.4px;height:54px;background:#fff;border:1px solid #f5f5f5;border-radius:4px;"></div>
<svg class="b" style="left:655.1px;top:456.3px;" width="17.6" height="17.6" viewBox="0 0 48 48" fill="none" stroke="#2b2b2b" stroke-width="4" stroke-linecap="round" stroke-linejoin="round"><circle cx="24" cy="12" r="3" fill="#2b2b2b" stroke="none"/><circle cx="24" cy="24" r="3" fill="#2b2b2b" stroke="none"/><circle cx="24" cy="36" r="3" fill="#2b2b2b" stroke="none"/></svg>
<span id="t71" class="t" style="left:686.8px;top:458.5px;font-size:10.5px;line-height:15px;color:#333;font-weight:400;">more-one</span>
<svg class="b" style="left:781.3px;top:463.5px" width="9" height="3" viewBox="0 0 9 3"><circle cx="1.200" cy="1.500" r=".8" fill="#aaa"/><circle cx="4.500" cy="1.500" r=".8" fill="#aaa"/><circle cx="7.800" cy="1.500" r=".8" fill="#aaa"/></svg>
<div class="b" style="left:983px;top:55px;width:8px;height:440px;background:linear-gradient(90deg,rgba(255,255,255,0),rgba(255,255,255,.55));"></div>
</div></div>
</body></html>
